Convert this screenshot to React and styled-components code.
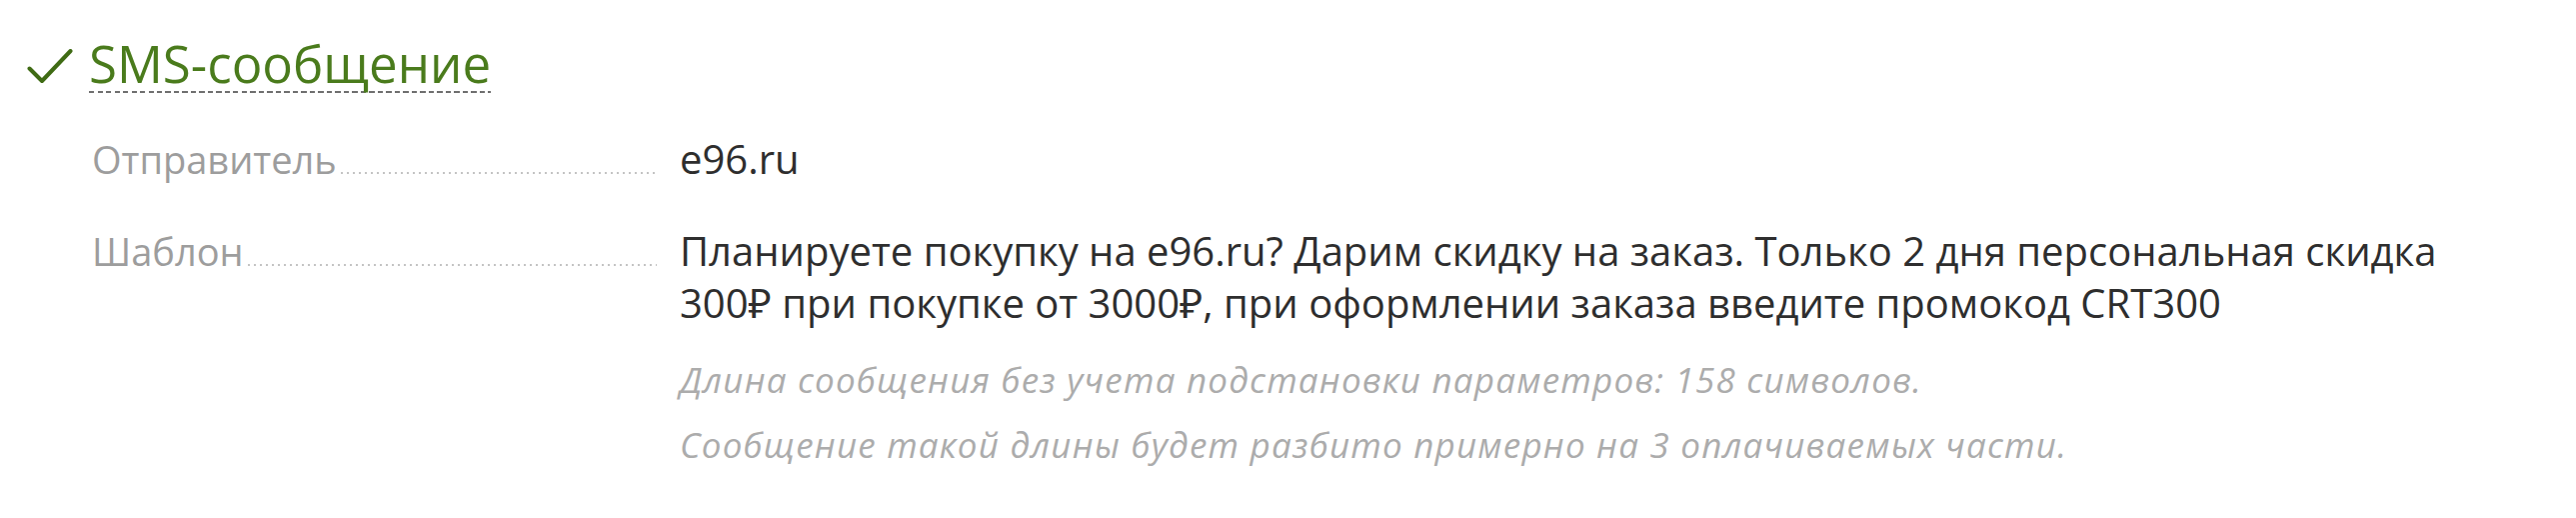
import React from "react";
import styled, { createGlobalStyle } from "styled-components";

const Global = createGlobalStyle`
  html, body { margin: 0; padding: 0; background: #ffffff; }
  body { font-family: "Open Sans", "Noto Sans", sans-serif; }
`;

const Page = styled.div`
  width: 2577px;
  height: 518px;
  box-sizing: border-box;
  padding: 33px 0 0 27px;
  display: flex;
  flex-direction: column;
`;

const HeadingRow = styled.div`
  display: flex;
  align-items: flex-start;
  gap: 16px;
`;

const Check = styled.svg`
  width: 46px;
  height: 36px;
  margin-top: 16px;
  flex: none;
`;

const Heading = styled.div`
  font-size: 51px;
  line-height: 60px;
  color: #4a7b1c;
  background-image: repeating-linear-gradient(
    to right,
    #6f6f6f 0,
    #6f6f6f 5px,
    transparent 5px,
    transparent 8.5px
  );
  background-size: 100% 2px;
  background-repeat: no-repeat;
  background-position: left bottom;
`;

const Fields = styled.div`
  display: flex;
  flex-direction: column;
  gap: 40px;
  margin: 40px 0 0 65px;
`;

const Row = styled.div`
  display: grid;
  grid-template-columns: 588px 1fr;
  align-items: baseline;
  line-height: 52px;
`;

const Label = styled.div`
  display: flex;
  align-items: baseline;
  font-size: 38px;
  color: #9d9d9d;
  padding-right: 23px;
`;

const Leader = styled.span`
  flex: 1;
  height: 2px;
  margin-left: 2px;
  background-image: radial-gradient(circle, #c4c4c4 0.9px, transparent 1.1px);
  background-size: 6px 2px;
  background-repeat: repeat-x;
`;

const Value = styled.div`
  font-size: 40px;
  color: #2e2e2e;
`;

const Note = styled.p`
  margin: ${(p) => p.$top}px 0 0;
  font-size: 35px;
  letter-spacing: 1.2px;
  line-height: 46px;
  font-style: italic;
  color: #acacac;
`;

export default function App() {
  return (
    <>
      <Global />
      <Page>
        <HeadingRow>
          <Check viewBox="0 0 46 36">
            <path
              d="M2.5 19.5 L15 32 L43.5 2"
              fill="none"
              stroke="#3f6b14"
              strokeWidth="4"
              strokeLinecap="round"
              strokeLinejoin="round"
            />
          </Check>
          <Heading>SMS-сообщение</Heading>
        </HeadingRow>
        <Fields>
          <Row>
            <Label>
              Отправитель
              <Leader />
            </Label>
            <Value>e96.ru</Value>
          </Row>
          <Row>
            <Label>
              Шаблон
              <Leader />
            </Label>
            <Value>
              Планируете покупку на e96.ru? Дарим скидку на заказ. Только 2 дня персональная скидка
              <br />
              300₽ при покупке от 3000₽, при оформлении заказа введите промокод CRT300
              <Note $top={28}>
                Длина сообщения без учета подстановки параметров: 158 символов.
              </Note>
              <Note $top={19}>
                Сообщение такой длины будет разбито примерно на 3 оплачиваемых части.
              </Note>
            </Value>
          </Row>
        </Fields>
      </Page>
    </>
  );
}
